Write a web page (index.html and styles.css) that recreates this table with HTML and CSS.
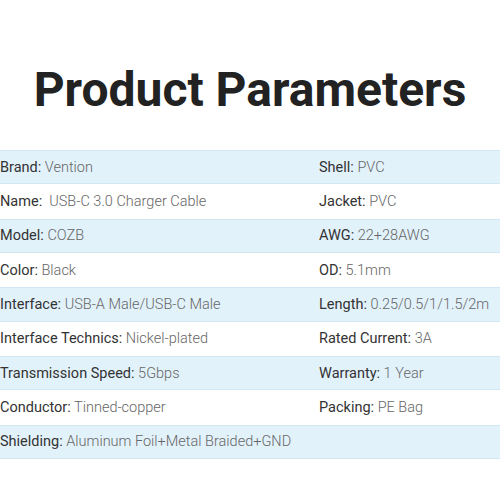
FILE: index.html
```html
<!DOCTYPE html>
<html>
<head>
<meta charset="utf-8">
<link rel="stylesheet" href="styles.css">
</head>
<body>
<div class="page">
  <h1 class="title">Product Parameters</h1>
  <div class="table">
    <div class="row blue"><div class="cell left"><b>Brand:</b> Vention</div><div class="cell"><b>Shell:</b> PVC</div></div>
    <div class="row"><div class="cell left"><b>Name:</b>&nbsp; USB-C 3.0 Charger Cable</div><div class="cell"><b>Jacket:</b> PVC</div></div>
    <div class="row blue"><div class="cell left"><b>Model:</b> COZB</div><div class="cell"><b>AWG:</b> 22+28AWG</div></div>
    <div class="row"><div class="cell left"><b>Color:</b> Black</div><div class="cell"><b>OD:</b> 5.1mm</div></div>
    <div class="row blue"><div class="cell left"><b>Interface:</b> USB-A Male/USB-C Male</div><div class="cell"><b>Length:</b> 0.25/0.5/1/1.5/2m</div></div>
    <div class="row"><div class="cell left"><b>Interface Technics:</b> Nickel-plated</div><div class="cell"><b>Rated Current:</b> 3A</div></div>
    <div class="row blue"><div class="cell left"><b>Transmission Speed:</b> 5Gbps</div><div class="cell"><b>Warranty:</b> 1 Year</div></div>
    <div class="row"><div class="cell left"><b>Conductor:</b> Tinned-copper</div><div class="cell"><b>Packing:</b> PE Bag</div></div>
    <div class="row blue"><div class="cell left"><b>Shielding:</b> Aluminum Foil+Metal Braided+GND</div><div class="cell"></div></div>
  </div>
</div>
</body>
</html>
```
FILE: styles.css
```css
html, body {
  margin: 0;
  padding: 0;
  background: #ffffff;
}
.page {
  width: 500px;
  height: 500px;
  overflow: hidden;
  font-family: Roboto, "Liberation Sans", sans-serif;
}
.title {
  margin: 0;
  padding-top: 60px;
  height: 150px;
  box-sizing: border-box;
  text-align: center;
  font-size: 48px;
  font-weight: 700;
  color: #222222;
  line-height: 60px;
}
.table {
  display: flex;
  flex-direction: column;
}
.row {
  display: flex;
  align-items: center;
  height: 34.33px;
  box-sizing: border-box;
  font-size: 14.5px;
  color: #666666;
  font-weight: 300;
}
.row.blue {
  background: #e2f2fb;
  border-top: 1px solid #d2e7f4;
  border-bottom: 1px solid #d2e7f4;
}
.cell {
  white-space: nowrap;
}
.cell.left {
  width: 319px;
  flex: none;
}
.cell b {
  font-weight: 400;
  color: #333333;
}
```
